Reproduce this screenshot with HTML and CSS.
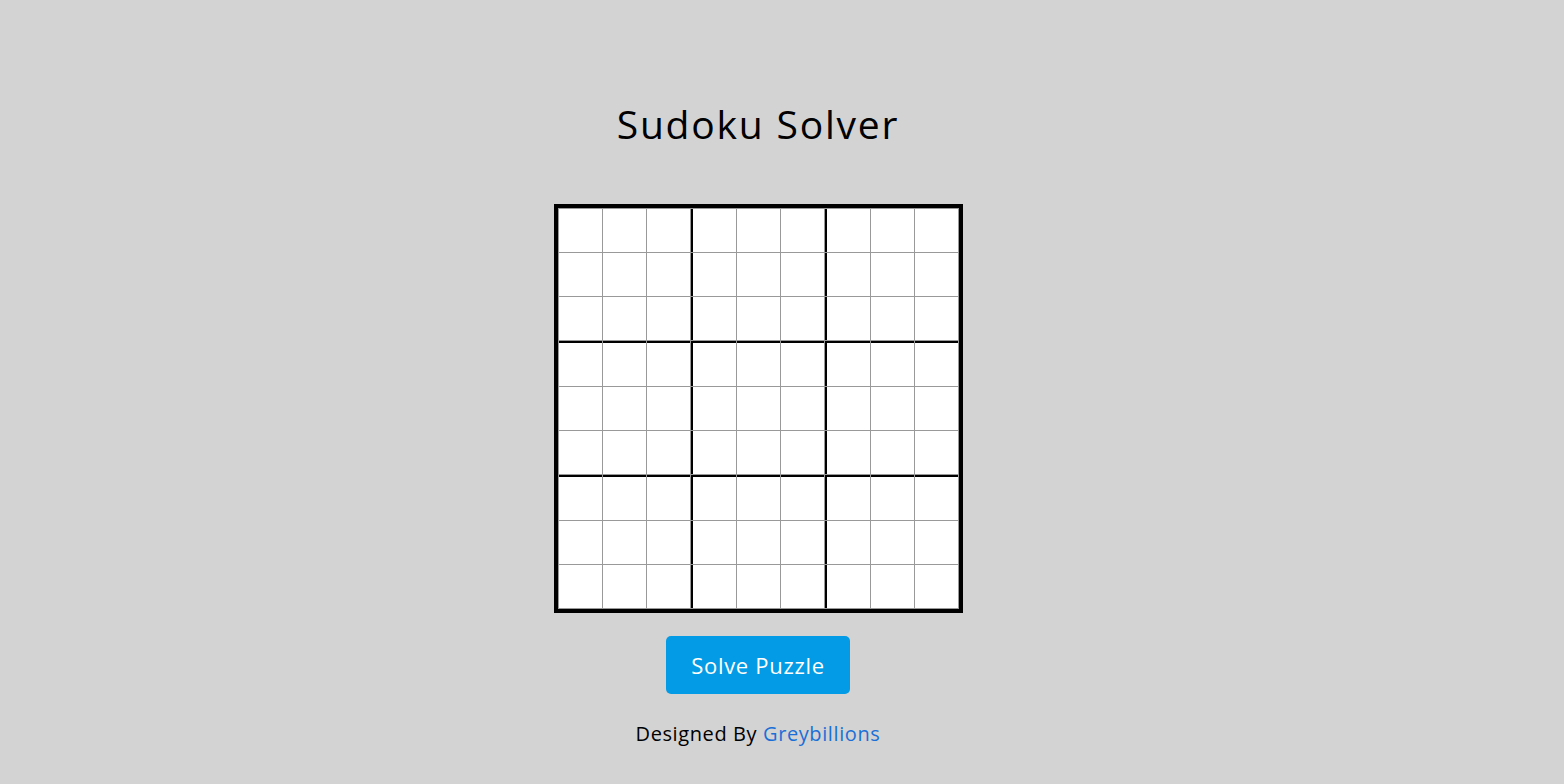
FILE: index.html
```html
<!DOCTYPE html>
<html lang="en">
<head>
<meta charset="utf-8">
<title>Sudoku Solver</title>
<link rel="stylesheet" href="styles.css">
</head>
<body>
<main class="page">
  <h1 class="title">Sudoku Solver</h1>
  <div class="board">
    <input class="cell"><input class="cell"><input class="cell"><input class="cell"><input class="cell"><input class="cell"><input class="cell"><input class="cell"><input class="cell">
    <input class="cell"><input class="cell"><input class="cell"><input class="cell"><input class="cell"><input class="cell"><input class="cell"><input class="cell"><input class="cell">
    <input class="cell"><input class="cell"><input class="cell"><input class="cell"><input class="cell"><input class="cell"><input class="cell"><input class="cell"><input class="cell">
    <input class="cell"><input class="cell"><input class="cell"><input class="cell"><input class="cell"><input class="cell"><input class="cell"><input class="cell"><input class="cell">
    <input class="cell"><input class="cell"><input class="cell"><input class="cell"><input class="cell"><input class="cell"><input class="cell"><input class="cell"><input class="cell">
    <input class="cell"><input class="cell"><input class="cell"><input class="cell"><input class="cell"><input class="cell"><input class="cell"><input class="cell"><input class="cell">
    <input class="cell"><input class="cell"><input class="cell"><input class="cell"><input class="cell"><input class="cell"><input class="cell"><input class="cell"><input class="cell">
    <input class="cell"><input class="cell"><input class="cell"><input class="cell"><input class="cell"><input class="cell"><input class="cell"><input class="cell"><input class="cell">
    <input class="cell"><input class="cell"><input class="cell"><input class="cell"><input class="cell"><input class="cell"><input class="cell"><input class="cell"><input class="cell">
  </div>
  <button class="solve-btn" type="button">Solve Puzzle</button>
  <p class="credit">Designed By <a class="credit-link" href="#">Greybillions</a></p>
</main>
</body>
</html>
```
FILE: styles.css
```css
* {
  box-sizing: border-box;
}

html, body {
  margin: 0;
  padding: 0;
  background: #d3d3d3;
}

body {
  font-family: "Open Sans", "Noto Sans", sans-serif;
  color: #000;
}

.page {
  display: flex;
  flex-direction: column;
  align-items: center;
  padding: 0 48px 0 0;
}

.title {
  margin: 96px 0 0;
  font-size: 39px;
  font-weight: 400;
  line-height: 56px;
  letter-spacing: 1.8px;
}

.board {
  margin-top: 52px;
  display: grid;
  grid-template-columns: repeat(9, auto);
  gap: 1px;
  padding: 1px;
  background: #999;
  border: 4px solid #000;
}

.cell {
  box-sizing: content-box;
  width: 43px;
  height: 43px;
  padding: 0;
  margin: 0;
  border: 0;
  background: #fff;
  outline: none;
  font: 20px "Open Sans", sans-serif;
  text-align: center;
}

.cell:nth-child(9n+4),
.cell:nth-child(9n+7) {
  border-left: 2px solid #000;
}

.cell:nth-child(n+28):nth-child(-n+36),
.cell:nth-child(n+55):nth-child(-n+63) {
  border-top: 2px solid #000;
}

.solve-btn {
  margin-top: 23px;
  width: 184px;
  height: 58px;
  border: 0;
  border-radius: 5px;
  background: #039be5;
  color: #fff;
  font-family: "Open Sans", sans-serif;
  font-size: 22px;
  letter-spacing: 0.7px;
  cursor: pointer;
}

.credit {
  margin: 25px 0 0;
  font-size: 20px;
  line-height: 30px;
  letter-spacing: 0.6px;
}

.credit-link {
  color: #1a6fd8;
  text-decoration: none;
}
```
